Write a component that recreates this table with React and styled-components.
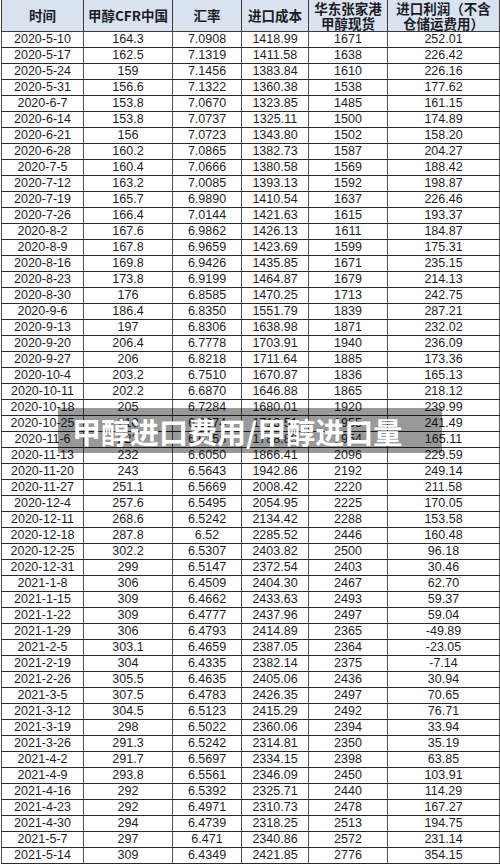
import styled, { createGlobalStyle } from "styled-components";

const GlobalStyle = createGlobalStyle`
  body {
    margin: 0;
    background: #fff;
  }
`;

const rows = [
  ["2020-5-10", "164.3", "7.0908", "1418.99", "1671", "252.01"],
  ["2020-5-17", "162.5", "7.1319", "1411.58", "1638", "226.42"],
  ["2020-5-24", "159", "7.1456", "1383.84", "1610", "226.16"],
  ["2020-5-31", "156.6", "7.1322", "1360.38", "1538", "177.62"],
  ["2020-6-7", "153.8", "7.0670", "1323.85", "1485", "161.15"],
  ["2020-6-14", "153.8", "7.0737", "1325.11", "1500", "174.89"],
  ["2020-6-21", "156", "7.0723", "1343.80", "1502", "158.20"],
  ["2020-6-28", "160.2", "7.0865", "1382.73", "1587", "204.27"],
  ["2020-7-5", "160.4", "7.0666", "1380.58", "1569", "188.42"],
  ["2020-7-12", "163.2", "7.0085", "1393.13", "1592", "198.87"],
  ["2020-7-19", "165.7", "6.9890", "1410.54", "1637", "226.46"],
  ["2020-7-26", "166.4", "7.0144", "1421.63", "1615", "193.37"],
  ["2020-8-2", "167.6", "6.9862", "1426.13", "1611", "184.87"],
  ["2020-8-9", "167.8", "6.9659", "1423.69", "1599", "175.31"],
  ["2020-8-16", "169.8", "6.9426", "1435.85", "1671", "235.15"],
  ["2020-8-23", "173.8", "6.9199", "1464.87", "1679", "214.13"],
  ["2020-8-30", "176", "6.8585", "1470.25", "1713", "242.75"],
  ["2020-9-6", "186.4", "6.8350", "1551.79", "1839", "287.21"],
  ["2020-9-13", "197", "6.8306", "1638.98", "1871", "232.02"],
  ["2020-9-20", "206.4", "6.7778", "1703.91", "1940", "236.09"],
  ["2020-9-27", "206", "6.8218", "1711.64", "1885", "173.36"],
  ["2020-10-4", "203.2", "6.7510", "1670.87", "1836", "165.13"],
  ["2020-10-11", "202.2", "6.6870", "1646.88", "1865", "218.12"],
  ["2020-10-18", "205", "6.7284", "1680.01", "1920", "239.99"],
  ["2020-10-25", "210", "6.6974", "1713.51", "1955", "241.49"],
  ["2020-11-6", "222", "6.6158", "1788.89", "1954", "165.11"],
  ["2020-11-13", "232", "6.6050", "1866.41", "2096", "229.59"],
  ["2020-11-20", "243", "6.5643", "1942.86", "2192", "249.14"],
  ["2020-11-27", "251.1", "6.5669", "2008.42", "2220", "211.58"],
  ["2020-12-4", "257.6", "6.5495", "2054.95", "2225", "170.05"],
  ["2020-12-11", "268.6", "6.5242", "2134.42", "2288", "153.58"],
  ["2020-12-18", "287.8", "6.52", "2285.52", "2446", "160.48"],
  ["2020-12-25", "302.2", "6.5307", "2403.82", "2500", "96.18"],
  ["2020-12-31", "299", "6.5147", "2372.54", "2403", "30.46"],
  ["2021-1-8", "306", "6.4509", "2404.30", "2467", "62.70"],
  ["2021-1-15", "309", "6.4662", "2433.63", "2493", "59.37"],
  ["2021-1-22", "309", "6.4777", "2437.96", "2497", "59.04"],
  ["2021-1-29", "306", "6.4793", "2414.89", "2365", "-49.89"],
  ["2021-2-5", "303.1", "6.4659", "2387.05", "2364", "-23.05"],
  ["2021-2-19", "304", "6.4335", "2382.14", "2375", "-7.14"],
  ["2021-2-26", "305.5", "6.4635", "2405.06", "2436", "30.94"],
  ["2021-3-5", "307.5", "6.4783", "2426.35", "2497", "70.65"],
  ["2021-3-12", "304.5", "6.5123", "2415.29", "2492", "76.71"],
  ["2021-3-19", "298", "6.5022", "2360.06", "2394", "33.94"],
  ["2021-3-26", "291.3", "6.5242", "2314.81", "2350", "35.19"],
  ["2021-4-2", "291.7", "6.5697", "2334.15", "2398", "63.85"],
  ["2021-4-9", "293.8", "6.5561", "2346.09", "2450", "103.91"],
  ["2021-4-16", "292", "6.5392", "2325.71", "2440", "114.29"],
  ["2021-4-23", "292", "6.4971", "2310.73", "2478", "167.27"],
  ["2021-4-30", "294", "6.4739", "2318.25", "2513", "194.75"],
  ["2021-5-7", "297", "6.471", "2340.86", "2572", "231.14"],
  ["2021-5-14", "309", "6.4349", "2421.85", "2776", "354.15"],
];

const widths = [82, 89, 69, 67, 79, 112];

const Frame = styled.div`
  position: relative;
  width: 500px;
  height: 865px;
  overflow: hidden;
`;

const Table = styled.table`
  border-collapse: collapse;
  table-layout: fixed;
  width: 498px;
  margin-left: 1px;
`;

const HeadCell = styled.th`
  height: 31px;
  padding: 0;
  background: #d9e2ef;
  border: 1px solid #3a3a3a;
  border-top: none;
  color: #1c1c24;
  font-family: "Noto Sans CJK SC", "Noto Sans", sans-serif;
  font-size: 13.5px;
  font-weight: 700;
  line-height: 14.5px;
  text-align: center;
  vertical-align: middle;
  white-space: nowrap;
`;

const Cell = styled.td`
  height: 15px;
  padding: 0;
  border: 1px solid #2a2a2a;
  border-left-color: #555;
  border-right-color: #555;
  color: #1e1e1e;
  font-family: "Liberation Sans", Arial, sans-serif;
  font-size: 12.5px;
  line-height: 15px;
  text-align: center;
  white-space: nowrap;
`;

const Banner = styled.div`
  position: absolute;
  left: 58px;
  top: 408px;
  width: 384px;
  height: 45px;
  display: flex;
  align-items: center;
  padding-left: 14px;
  box-sizing: border-box;
  background: rgba(0, 0, 0, 0.4);
  color: #fff;
  font-family: "Noto Sans CJK SC", "Noto Sans", sans-serif;
  font-size: 29px;
  font-weight: 700;
  white-space: nowrap;
`;

export default function App() {
  return (
    <>
      <GlobalStyle />
      <Frame>
        <Table>
          <colgroup>
            {widths.map((w, i) => (
              <col key={i} style={{ width: w }} />
            ))}
          </colgroup>
          <thead>
            <tr>
              <HeadCell>时间</HeadCell>
              <HeadCell>甲醇CFR中国</HeadCell>
              <HeadCell>汇率</HeadCell>
              <HeadCell>进口成本</HeadCell>
              <HeadCell>
                华东张家港
                <br />
                甲醇现货
              </HeadCell>
              <HeadCell>
                进口利润（不含
                <br />
                仓储运费用）
              </HeadCell>
            </tr>
          </thead>
          <tbody>
            {rows.map((r) => (
              <tr key={r[0]}>
                {r.map((v, i) => (
                  <Cell key={i}>{v}</Cell>
                ))}
              </tr>
            ))}
          </tbody>
        </Table>
        <Banner>甲醇进口费用/甲醇进口量</Banner>
      </Frame>
    </>
  );
}
